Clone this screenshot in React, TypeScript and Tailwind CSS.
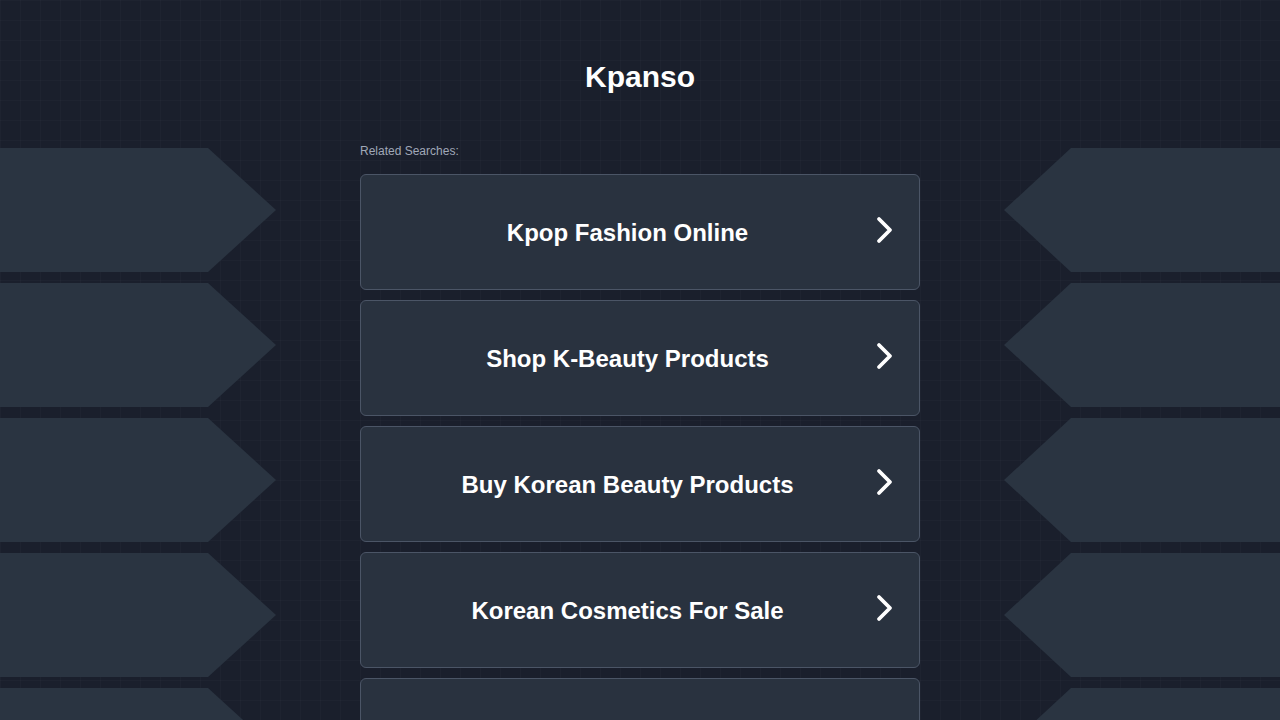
import React from 'react'

const searches = [
  'Kpop Fashion Online',
  'Shop K-Beauty Products',
  'Buy Korean Beauty Products',
  'Korean Cosmetics For Sale',
  'Korean Skin Care Sets',
]

function Chevron() {
  return (
    <svg width="20" height="28" viewBox="0 0 20 28" fill="none" className="-mt-[4px]">
      <polyline
        points="4,3 15,14 4,25"
        stroke="#ffffff"
        strokeWidth="3.8"
        strokeLinecap="round"
        strokeLinejoin="round"
      />
    </svg>
  )
}

function SideShapes({ side }: { side: 'left' | 'right' }) {
  const shape =
    side === 'left'
      ? '[clip-path:polygon(0_0,208px_0,276px_50%,208px_100%,0_100%)]'
      : '[clip-path:polygon(67px_0,100%_0,100%_100%,67px_100%,0_50%)]'
  return (
    <div className="flex flex-col gap-[11px] pt-[148px]">
      {[0, 1, 2, 3, 4].map((i) => (
        <div key={i} className={`h-[124px] w-[276px] shrink-0 bg-[#2a3441] ${shape}`} />
      ))}
    </div>
  )
}

export default function App() {
  return (
    <div
      className="grid h-screen grid-cols-[276px_1fr_560px_1fr_276px] overflow-hidden bg-[#1a1f2c] bg-[linear-gradient(rgba(255,255,255,0.018)_1px,transparent_1px),linear-gradient(90deg,rgba(255,255,255,0.018)_1px,transparent_1px)] bg-[size:20px_20px] font-['Liberation_Sans',Arial,sans-serif]"
    >
      <SideShapes side="left" />
      <div />

      <div className="flex flex-col">
        <h1 className="pt-[57px] text-center text-[30px] font-bold leading-[40px] text-white">Kpanso</h1>

        <p className="mt-[46px] text-[12px] leading-[16px] text-[#a0a8b8]">Related Searches:</p>

        <div className="mt-[15px] flex flex-col gap-[10px]">
          {searches.map((s) => (
            <a
              key={s}
              href="#"
              className="flex h-[116px] shrink-0 items-center rounded-[6px] border border-[#4b5566] bg-[#29323f] pl-[19px] pr-[24px]"
            >
              <span className="flex-1 pt-[2px] text-center text-[24px] font-bold text-white">{s}</span>
              <Chevron />
            </a>
          ))}
        </div>
      </div>

      <div />
      <SideShapes side="right" />
    </div>
  )
}
